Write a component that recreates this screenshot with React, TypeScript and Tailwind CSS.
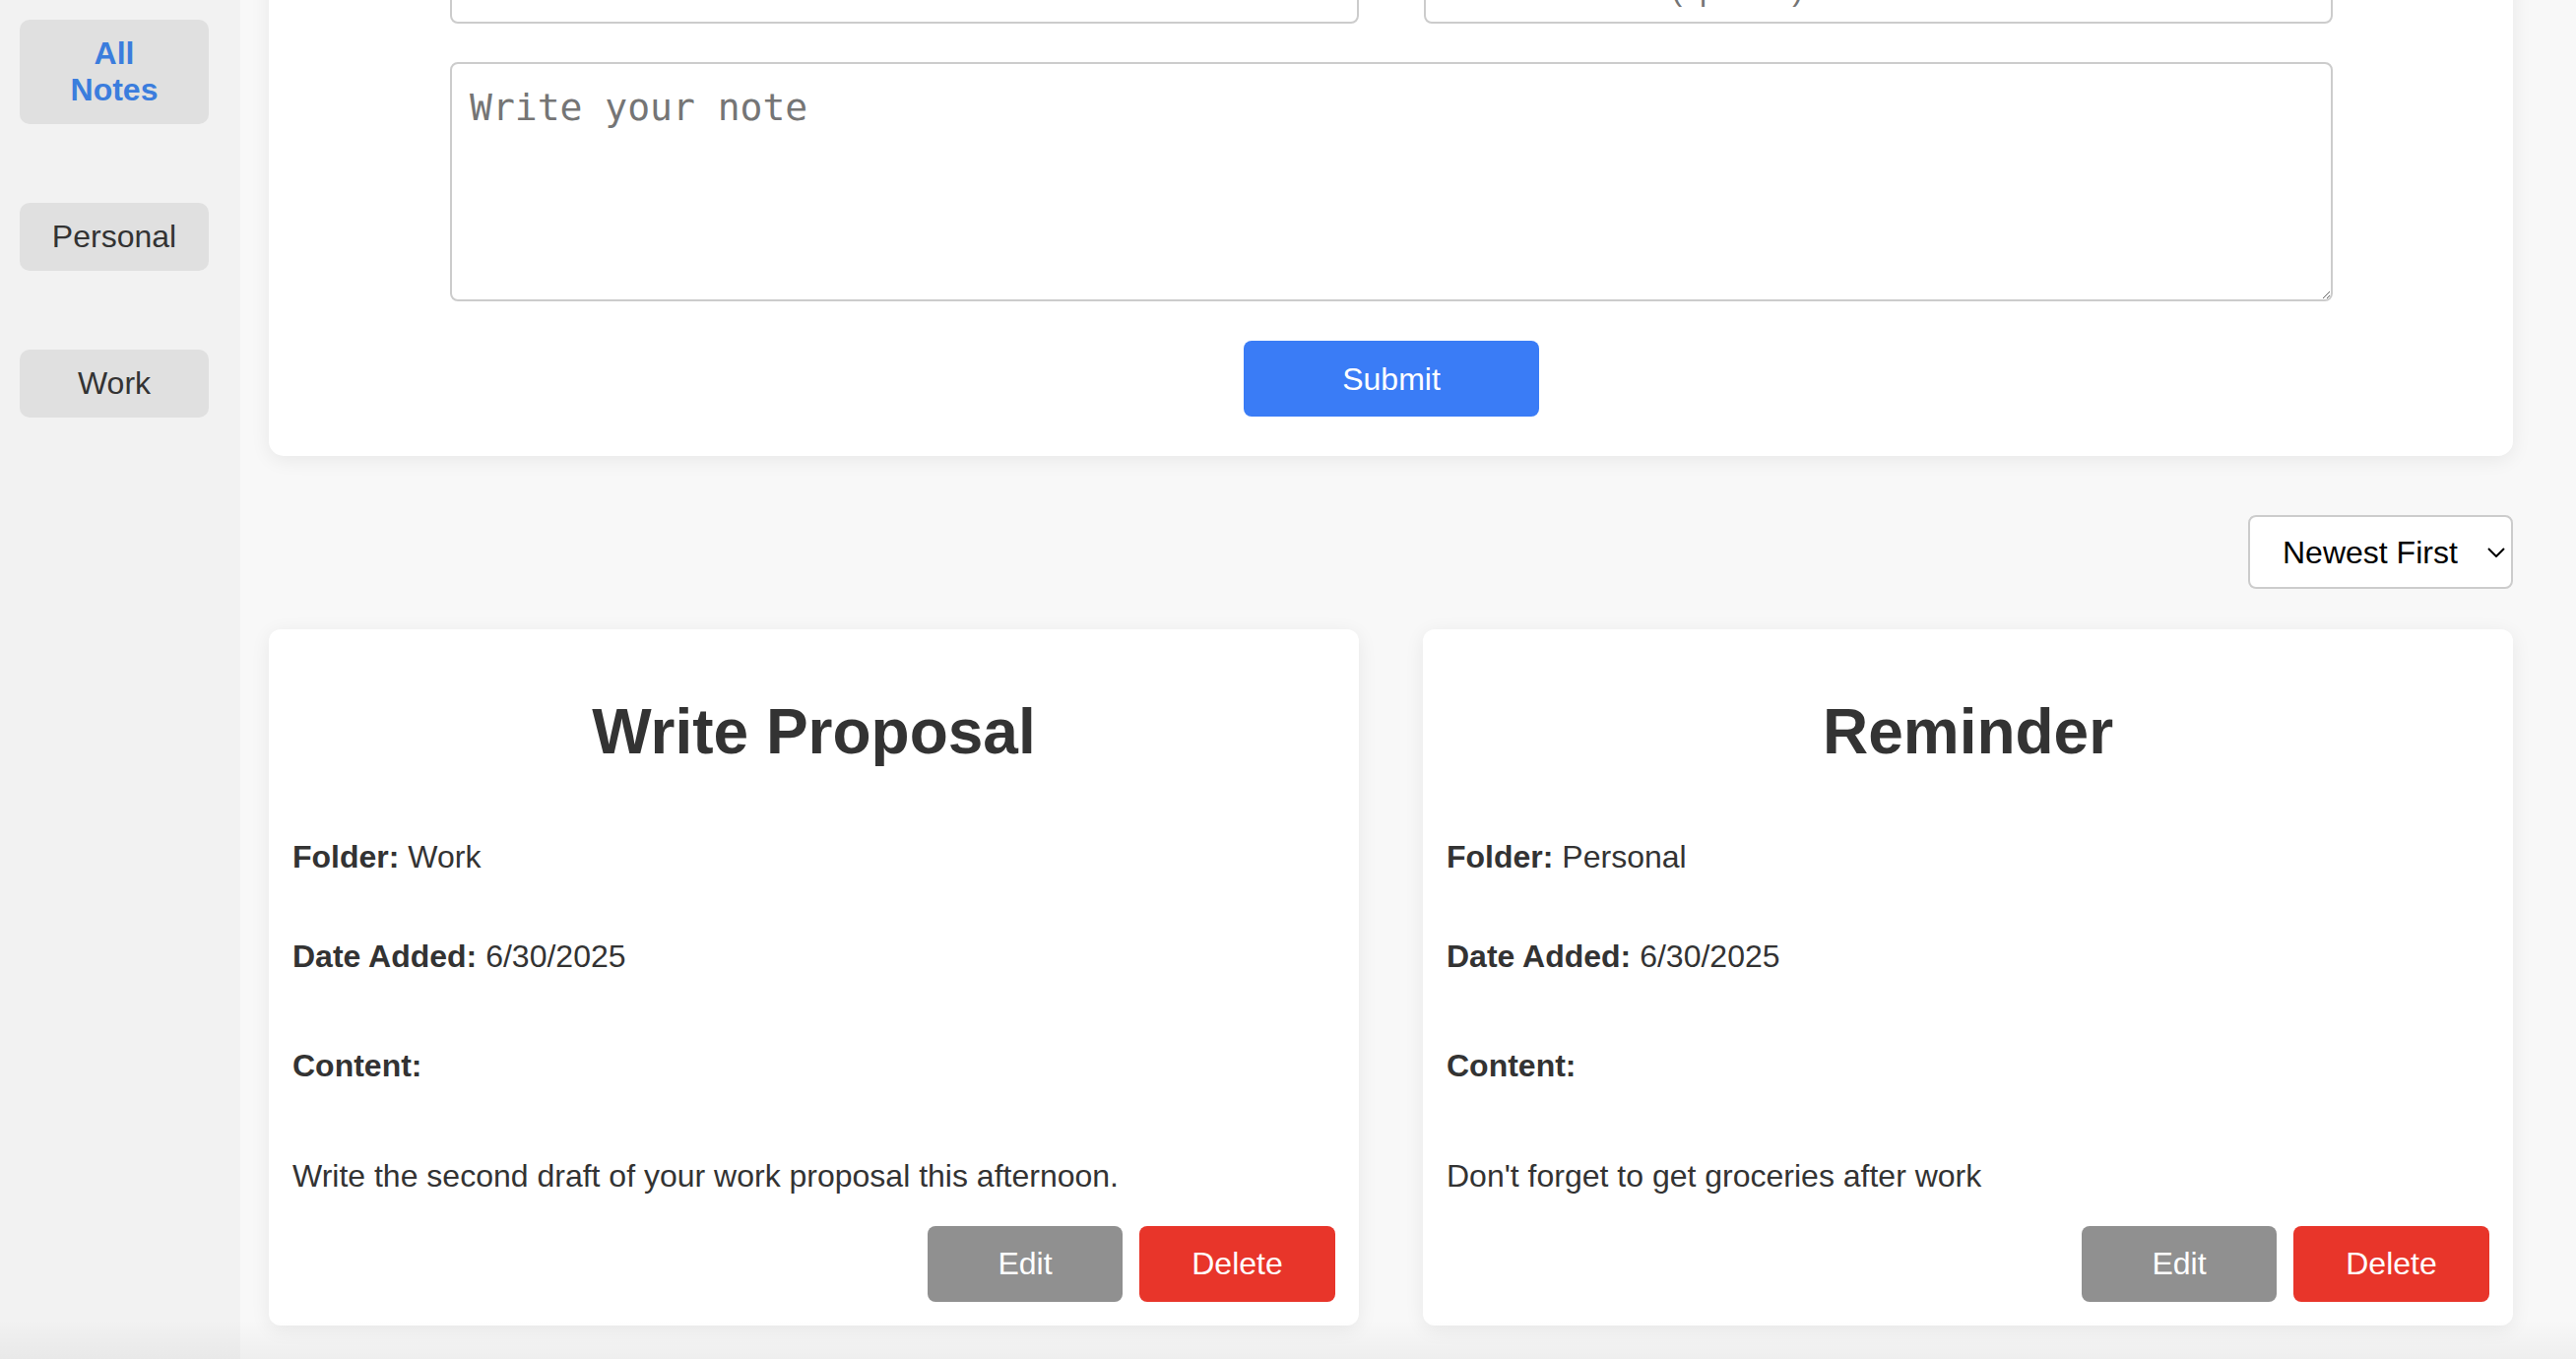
import { useState } from "react";

type Note = {
  id: number;
  title: string;
  folder: string;
  dateAdded: string;
  content: string;
};

const folders = ["All Notes", "Personal", "Work"];

const notes: Note[] = [
  {
    id: 2,
    title: "Write Proposal",
    folder: "Work",
    dateAdded: "6/30/2025",
    content: "Write the second draft of your work proposal this afternoon.",
  },
  {
    id: 1,
    title: "Reminder",
    folder: "Personal",
    dateAdded: "6/30/2025",
    content: "Don't forget to get groceries after work",
  },
];

function Sidebar(props: { active: string; onSelect: (f: string) => void }) {
  return (
    <aside className="w-[244px] shrink-0 bg-[#f2f2f2] flex flex-col gap-[80px] pt-[20px] px-[20px]">
      {folders.map((folder) => {
        const isActive = folder === props.active;
        return (
          <button
            key={folder}
            onClick={() => props.onSelect(folder)}
            className={
              isActive
                ? "w-[192px] bg-[#e0e0e0] rounded-[10px] px-[32px] py-[16px] text-[32px] leading-[37px] font-bold text-[#3b7ddd]"
                : "w-[192px] bg-[#e0e0e0] rounded-[10px] px-[32px] py-[16px] text-[32px] leading-[37px] text-[#333]"
            }
          >
            {folder}
          </button>
        );
      })}
    </aside>
  );
}

function NoteForm() {
  return (
    <section className="-mt-[86px] bg-white rounded-[15px] shadow-[0_4px_20px_rgba(0,0,0,0.07)] pt-[40px] pb-[40px] pl-[184px] pr-[183px] flex flex-col">
      <div className="grid grid-cols-2 gap-[66px]">
        <input
          className="h-[70px] border-2 border-[#cccccc] rounded-[8px] px-[20px] text-[32px] bg-white placeholder:text-[#757575]"
          placeholder="Title"
        />
        <input
          className="h-[70px] border-2 border-[#cccccc] rounded-[8px] pl-[150px] pr-[20px] text-[32px] bg-white placeholder:text-[#757575]"
          placeholder="Folder (optional)"
        />
      </div>
      <textarea
        className="mt-[39px] h-[243px] w-full border-2 border-[#cccccc] rounded-[8px] pt-[16px] pl-[18px] pr-[18px] text-[38px] font-['DejaVu_Sans_Mono',monospace] placeholder:text-[#757575] bg-white"
        placeholder="Write your note"
      />
      <button className="mt-[40px] mx-auto w-[300px] h-[77px] rounded-[8px] bg-[#3a7cf6] text-white text-[32px]">
        Submit
      </button>
    </section>
  );
}

function SortSelect() {
  return (
    <div className="mt-[60px] flex justify-end">
      <div className="w-[269px] h-[75px] bg-white border-2 border-[#cccccc] rounded-[8px] flex items-center pl-[33px] pr-[6px] text-[32px] text-black">
        <span>Newest First</span>
        <svg
          className="ml-auto"
          width="18"
          height="10"
          viewBox="0 0 18 10"
          fill="none"
          stroke="black"
          strokeWidth="2"
        >
          <path d="M1 1l8 8 8-8" />
        </svg>
      </div>
    </div>
  );
}

function NoteCard(props: { note: Note }) {
  const { note } = props;
  return (
    <div className="bg-white rounded-[12px] shadow-[0_4px_20px_rgba(0,0,0,0.07)] px-[24px] pb-[24px] flex flex-col text-[32px] leading-[37px] text-[#333]">
      <h2 className="mt-[67px] text-[64px] leading-[74px] font-bold text-center">
        {note.title}
      </h2>
      <p className="mt-[72px]">
        <strong>Folder:</strong> {note.folder}
      </p>
      <p className="mt-[64px]">
        <strong>Date Added:</strong> {note.dateAdded}
      </p>
      <p className="mt-[74px]">
        <strong>Content:</strong>
      </p>
      <p className="mt-[75px]">{note.content}</p>
      <div className="mt-[32px] flex justify-end gap-[17px]">
        <button className="w-[198px] h-[77px] rounded-[8px] bg-[#909090] text-white">
          Edit
        </button>
        <button className="w-[199px] h-[77px] rounded-[8px] bg-[#e8352a] text-white">
          Delete
        </button>
      </div>
    </div>
  );
}

export default function App() {
  const [activeFolder, setActiveFolder] = useState("All Notes");

  return (
    <div className="relative flex h-[1380px] w-full overflow-hidden bg-[#f8f8f8] text-[#333] font-['Liberation_Sans',Arial,sans-serif]">
      <Sidebar active={activeFolder} onSelect={setActiveFolder} />
      <main className="flex-1 pl-[29px] pr-[64px]">
        <NoteForm />
        <SortSelect />
        <div className="mt-[41px] grid grid-cols-2 gap-[65px]">
          {notes.map((note) => (
            <NoteCard note={note} key={note.id} />
          ))}
        </div>
      </main>
      {/* faint shade along the bottom edge */}
      <div className="pointer-events-none absolute bottom-0 left-0 right-0 h-[40px] bg-linear-to-b from-transparent to-black/[0.04]" />
    </div>
  );
}
